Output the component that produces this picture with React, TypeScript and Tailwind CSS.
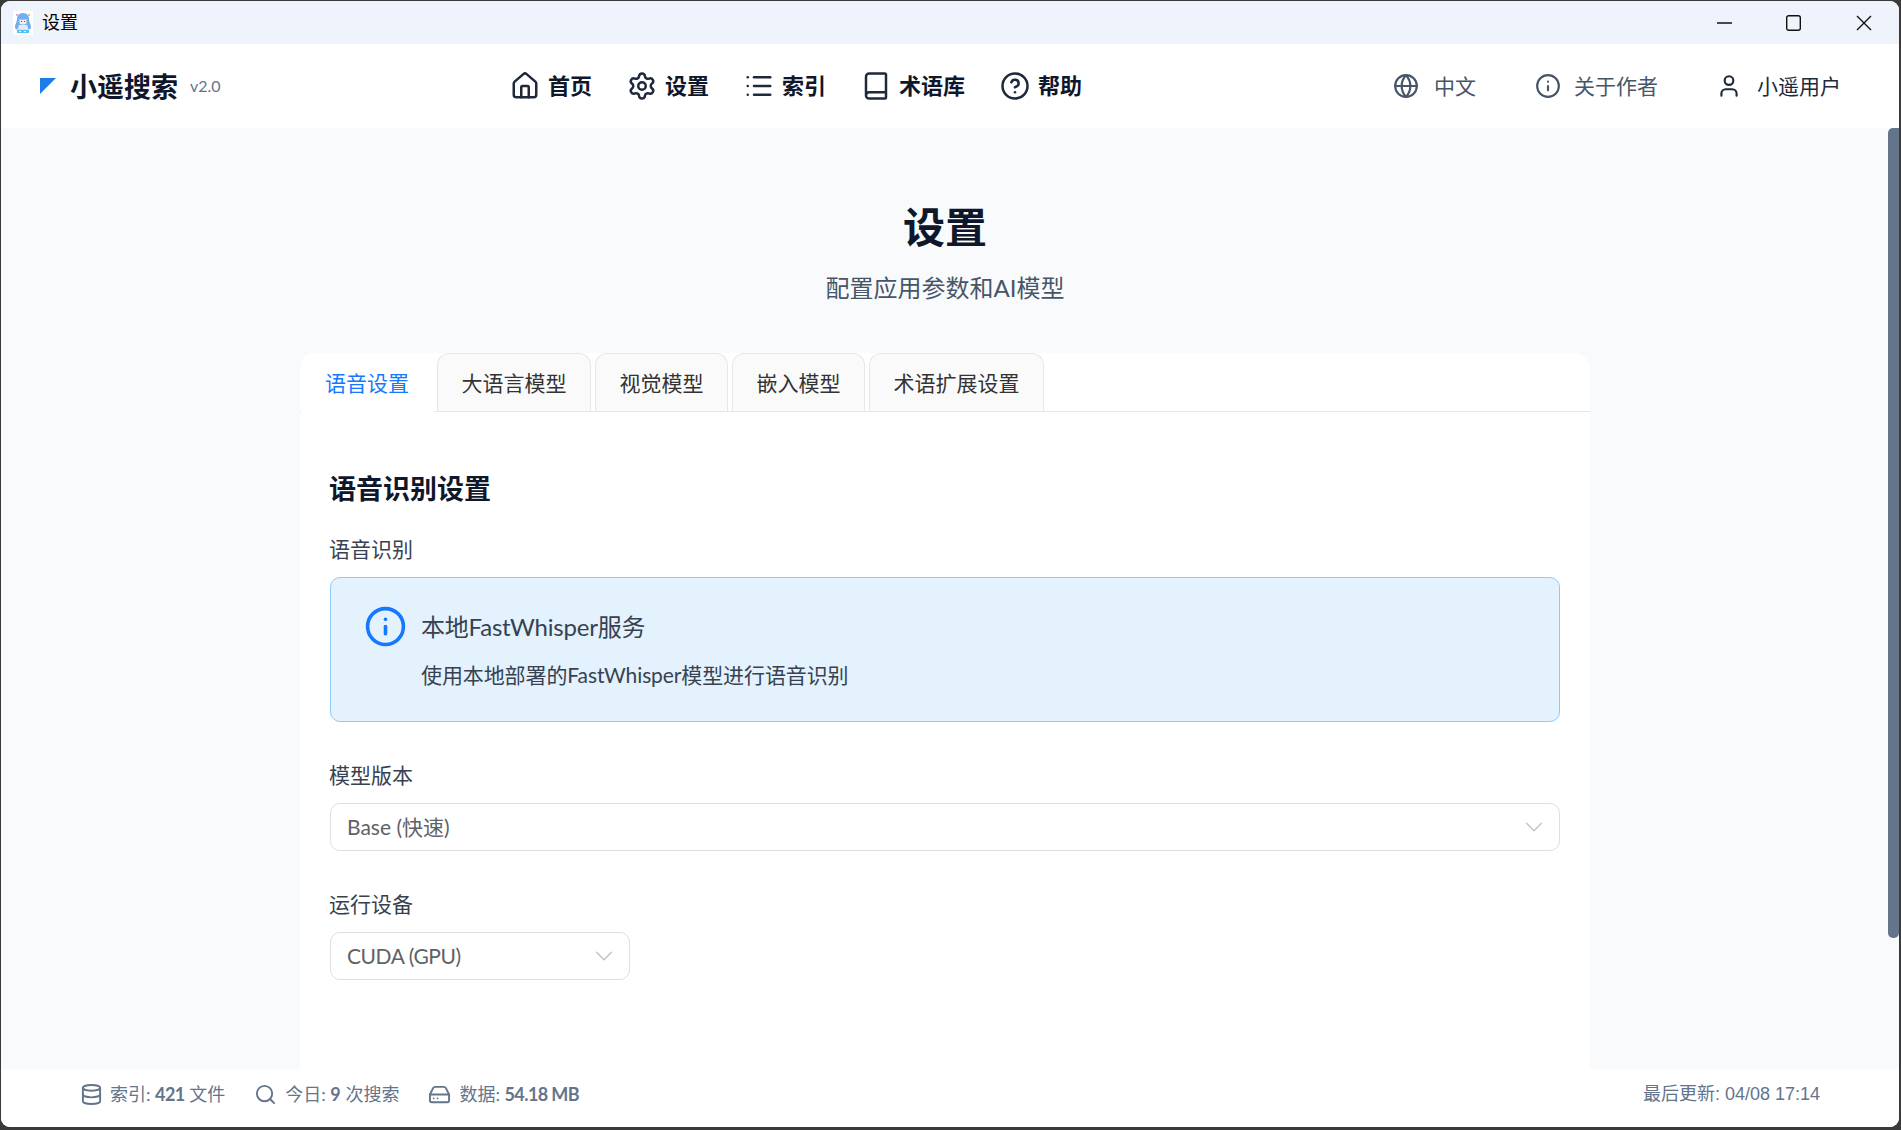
import { Book, ChevronDown, CircleHelp, Database, Globe, HardDrive, House, Info, List, Search, Settings, User } from "lucide-react";

const navItems = [
  { label: "首页", icon: House },
  { label: "设置", icon: Settings },
  { label: "索引", icon: List },
  { label: "术语库", icon: Book },
  { label: "帮助", icon: CircleHelp },
];

const tabs = ["大语言模型", "视觉模型", "嵌入模型", "术语扩展设置"];

function AppIcon() {
  return (
    <svg width="20" height="24" viewBox="0 0 20 24" className="shrink-0">
      <rect width="20" height="24" fill="#ffffff" />
      <path d="M10 2C6 2 4 5 4 8c0 3-2 5-2 8 0 1 .5 2 1.500 2.500h13c1-.5 1.500-1.500 1.500-2.500 0-3-2-5-2-8 0-3-2-6-6-6z" fill="#6db0f0" />
      <path d="M6.500 8c1.500 1 5.500 1 7 0v4c-1 2-6 2-7 0z" fill="#fbe9e4" />
      <path d="M6 14h8l1.500 4.500h-11z" fill="#e6e9f7" />
      <rect x="4" y="19" width="12" height="3" fill="#55c0f8" />
      <rect x="6" y="20" width="2" height="1" fill="#ffffff" />
      <rect x="11" y="20" width="2" height="1" fill="#ffffff" />
      <rect x="3" y="3" width="2" height="2" fill="#f2a8c4" />
      <rect x="15" y="3" width="2" height="2" fill="#f5b98c" />
      <rect x="8" y="10" width="1" height="1" fill="#2d5fa8" />
      <rect x="11" y="10" width="1" height="1" fill="#2d5fa8" />
    </svg>
  );
}

function WindowControls() {
  return (
    <div className="flex items-center">
      <svg width="15" height="2" viewBox="0 0 15 2" className="mr-[54px]">
        <path d="M0 1h15" stroke="#111" strokeWidth="1.3" />
      </svg>
      <svg width="15" height="16" viewBox="0 0 15 16" className="mr-[55px]">
        <rect x="0.700" y="0.700" width="13.600" height="14.600" rx="2" fill="none" stroke="#111" strokeWidth="1.400" />
      </svg>
      <svg width="16" height="16" viewBox="0 0 16 16">
        <path d="M1 1l14 14M15 1L1 15" stroke="#111" strokeWidth="1.400" />
      </svg>
    </div>
  );
}

function SelectBox({ value, className, valueClass }: { value: string; className: string; valueClass?: string }) {
  return (
    <div className={`flex h-12 items-center justify-between rounded-[10px] border border-[#dcdfe6] bg-white pl-4 pr-[10px] ${className}`}>
      <span className={`text-[21px] text-[#606266] ${valueClass ?? ""}`}>{value}</span>
      <ChevronDown size={30} strokeWidth={1} className="text-[#bcc0c7]" />
    </div>
  );
}

export default function App() {
  return (
    <div className="h-screen w-screen overflow-hidden bg-[#3a3a3a] pb-[3px] pl-px pr-[2px] pt-px [font-family:'Lato','Noto_Sans_CJK_SC',sans-serif]">
      <div className="flex h-full flex-col overflow-hidden rounded-[9px] bg-white">
        <div className="flex h-[43px] shrink-0 items-center justify-between bg-[#eff3fb] pl-[12px] pr-[27px]">
          <div className="flex items-center gap-[9px]">
            <AppIcon />
            <span className="-mt-[2px] text-[18px] leading-none text-black">设置</span>
          </div>
          <WindowControls />
        </div>

        <header className="flex h-[84px] shrink-0 items-center bg-white pl-[39px] pr-[58px]">
          <div className="flex w-[470px] items-center">
            <svg width="16" height="16" viewBox="0 0 16 16" className="mr-[14px] shrink-0">
              <path d="M0 0h16L0 16z" fill="#1a7ee6" />
            </svg>
            <span className="text-[27px] font-bold leading-none text-[#0f172a]">小遥搜索</span>
            <span className="ml-3 text-[16px] leading-none text-[#64748b]">v2.0</span>
          </div>
          <nav className="flex items-center gap-[35px]">
            {navItems.map((item) => (
              <div key={item.label} className="flex items-center gap-2">
                <item.icon size={30} strokeWidth={2} className="text-[#1e293b]" />
                <span className="-mt-px text-[22px] font-bold text-[#0f172a]">{item.label}</span>
              </div>
            ))}
          </nav>
          <div className="ml-auto flex items-center">
            <div className="flex items-center gap-[15px]">
              <Globe size={26} className="text-[#475569]" />
              <span className="text-[21px] text-[#475569]">中文</span>
            </div>
            <div className="ml-[59px] flex items-center gap-[13px]">
              <Info size={26} className="text-[#475569]" />
              <span className="text-[21px] text-[#475569]">关于作者</span>
            </div>
            <div className="ml-[58px] flex items-center gap-[15px]">
              <User size={26} className="text-[#1e293b]" />
              <span className="text-[21px] text-[#1e293b]">小遥用户</span>
            </div>
          </div>
        </header>

        <main className="relative min-h-0 flex-1 overflow-hidden bg-[#f8fafc] pr-[10px]">
          <div className="pt-[71px] text-center">
            <h1 className="text-[42px] font-bold leading-[56px] text-[#0f172a]">设置</h1>
            <p className="mt-[17px] text-[24px] leading-8 text-[#475569]">配置应用参数和AI模型</p>
          </div>

          <section className="mx-auto mt-[49px] h-[900px] w-[1290px] rounded-t-[16px] bg-white">
            <div className="flex h-[59px] border-b border-[#e5e7eb] pl-px">
              <div className="-mb-px flex h-[59px] w-[133px] items-center rounded-t-[12px] bg-white pl-6 pt-px text-[21px] text-[#1677ff]">
                语音设置
              </div>
              <div className="ml-[3px] flex gap-1">
                {tabs.map((tab) => (
                  <div key={tab} className="flex h-[58px] items-center rounded-t-[12px] border border-b-0 border-[#e5e7eb] bg-[#fafafa] px-[23.5px] pt-px text-[21px] text-[#333333]">
                    {tab}
                  </div>
                ))}
              </div>
            </div>

            <div className="px-[30px] pt-[59px]">
              <h2 className="-ml-px text-[27px] font-bold leading-9 text-[#0f172a]">语音识别设置</h2>
              <div className="-ml-px mt-[28px] text-[21px] leading-7 text-[#374151]">语音识别</div>

              <div className="mt-[14px] flex h-[145px] items-start gap-[14px] rounded-[10px] border border-[#90caf9] bg-[#e3f2fd] pl-[33px] pt-[27px]">
                <Info size={43} strokeWidth={2} className="shrink-0 text-[#1677ff]" />
                <div className="pt-[5px]">
                  <div className="text-[24px] leading-[34px] tracking-[-0.22px] text-[#374151]">本地FastWhisper服务</div>
                  <div className="mt-[17px] text-[21px] leading-7 tracking-[-0.1px] text-[#374151]">使用本地部署的FastWhisper模型进行语音识别</div>
                </div>
              </div>

              <div className="-ml-px mt-[39px] text-[21px] leading-7 text-[#374151]">模型版本</div>
              <SelectBox value="Base (快速)" className="mt-[14px] w-full" />

              <div className="-ml-px mt-[39px] text-[21px] leading-7 text-[#374151]">运行设备</div>
              <SelectBox value="CUDA (GPU)" valueClass="tracking-[-0.45px]" className="mt-[14px] w-[300px]" />
            </div>
          </section>

          {/* overlay scrollbar */}
          <div className="absolute right-0 top-0 h-[810px] w-[11px] rounded-l-[5px] rounded-br-[5px] bg-[#64748b]" />
        </main>

        <footer className="flex h-[58px] shrink-0 items-center justify-between bg-white px-[79px] pb-[7px] text-[18px] text-[#64748b]">
          <div className="flex items-center">
            <div className="flex items-center gap-[7px]">
              <Database size={23} />
              <span>索引: <span className="font-bold tracking-[-0.6px]">421</span> 文件</span>
            </div>
            <div className="ml-[29px] flex items-center gap-2">
              <Search size={23} />
              <span>今日: <span className="font-bold">9</span> 次搜索</span>
            </div>
            <div className="ml-[29px] flex items-center gap-2">
              <HardDrive size={23} />
              <span>数据: <span className="font-bold tracking-[-0.6px]">54.18 MB</span></span>
            </div>
          </div>
          <span className="[font-family:'Liberation_Sans','Noto_Sans_CJK_SC',sans-serif]">最后更新: 04/08 17:14</span>
        </footer>
      </div>
    </div>
  );
}
